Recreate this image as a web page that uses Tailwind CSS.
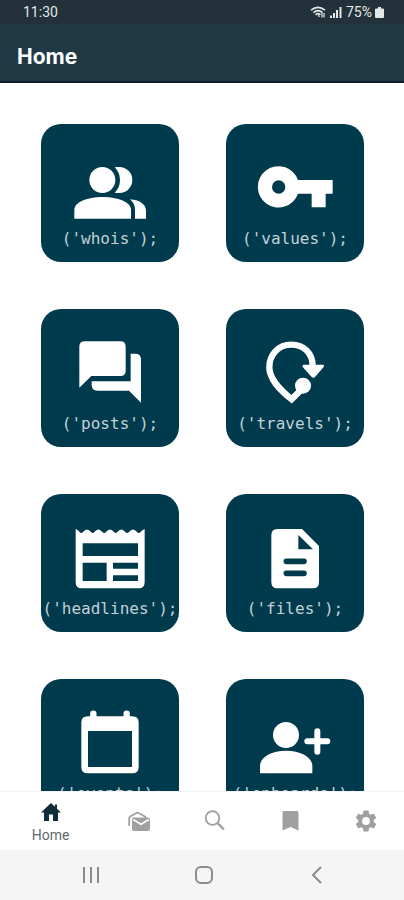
<!DOCTYPE html>
<html lang="en">
<head>
<meta charset="UTF-8">
<meta name="viewport" content="width=device-width, initial-scale=1.0">
<title>Home</title>
<script src="https://cdn.jsdelivr.net/npm/@tailwindcss/browser@4"></script>
</head>
<body class="bg-white">

<div class="h-screen flex flex-col overflow-hidden font-['Roboto',sans-serif]">

  <!-- Status bar -->
  <div class="h-6 shrink-0 flex items-center justify-between pl-[23px] pr-5 bg-[#22313a] text-[#e3e8ea] text-sm">
    <span>11:30</span>
    <div class="flex items-center gap-1">
      <svg class="w-4 h-3" viewBox="0 0 16 12" fill="none" stroke="currentColor" stroke-width="1.6">
        <path d="M1 4.2Q8-1.4 15 4.2M3.4 6.6Q8 2.6 12.6 6.6M5.6 8.8Q8 6.6 10.4 8.8"/>
        <path d="M8 9.4l1.6 1.4M12 7v4.6M14 7v4.6" stroke-width="1.2"/>
      </svg>
      <svg class="w-3 h-3" viewBox="0 0 12 12" fill="currentColor">
        <path d="M0 9.5h2V12H0zM3 7h2v5H3zM6 4h2v8H6zM9.5 1h2v11h-2z"/>
      </svg>
      <div class="flex items-center gap-[3px]">
        <span>75%</span>
        <svg class="w-[9px] h-3" viewBox="0 0 9 12" fill="currentColor">
          <path d="M3 1h3v1.5h2q1 0 1 1V11q0 1-1 1H1q-1 0-1-1V3.500q0-1 1-1h2z"/>
        </svg>
      </div>
    </div>
  </div>

  <!-- Header -->
  <header class="h-[59px] shrink-0 flex items-center px-[17px] pt-2 bg-[#1f3a45] border-b-2 border-[#0d1d25]">
    <h1 class="font-['Inter',sans-serif] font-bold text-[21px] leading-6 text-white">Home</h1>
  </header>

  <!-- Tiles -->
  <main class="flex-1 min-h-0 overflow-hidden">
    <div class="grid grid-cols-2 gap-[47px] pt-[41px] pl-[41px] pr-10 text-base leading-9 text-[#c3d0d8] font-['DejaVu_Sans_Mono',monospace]">

      <a href="#" class="aspect-square flex flex-col items-center pt-[15px] rounded-[20px] bg-[#003b4d]">
        <svg class="w-[92px] h-[82px] shrink-0" viewBox="102 87 276 246" fill="#fff">
          <circle cx="217" cy="210" r="39"/>
          <path d="M254 172Q262 170 268 171A39 39 0 0 1 268 249Q262 250 254 248Q270 232 270 210Q270 188 254 172z"/>
          <path d="M133 326V300C133 276 172 261 218 261S303 276 303 300V326z"/>
          <path d="M300 268C327 270 348 282 348 302V326H315V300Q315 280 300 268z"/>
        </svg>
        <span class="whitespace-nowrap">('whois');</span>
      </a>

      <a href="#" class="aspect-square flex flex-col items-center pt-[15px] rounded-[20px] bg-[#003b4d]">
        <svg class="w-[92px] h-[82px] shrink-0" viewBox="102 87 276 246" fill="#fff">
          <path fill-rule="evenodd" d="M249 210H353V251H332V292H290V251H249A62 62 0 1 1 249 210zM191 211A20 20 0 1 0 191 251A20 20 0 1 0 191 211z"/>
        </svg>
        <span class="whitespace-nowrap">('values');</span>
      </a>

      <a href="#" class="aspect-square flex flex-col items-center pt-[15px] rounded-[20px] bg-[#003b4d]">
        <svg class="w-[92px] h-[82px] shrink-0" viewBox="102 87 276 246" fill="#fff">
          <path d="M165 139H271Q287 139 287 155V228Q287 243 271 243H184L148 278V155Q148 139 165 139z"/>
          <path d="M302 176H316Q333 176 333 193V323L297 287H202Q185 287 185 270V259H302z"/>
        </svg>
        <span class="whitespace-nowrap">('posts');</span>
      </a>

      <a href="#" class="aspect-square flex flex-col items-center pt-[15px] rounded-[20px] bg-[#003b4d]">
        <svg class="w-[92px] h-[82px] shrink-0" viewBox="102 87 276 246" fill="#fff">
          <path d="M293 213C293 174 266 149 229 149C191 149 163 178 163 217C163 252 193 283 230 313L260 283" fill="none" stroke="#fff" stroke-width="19"/>
          <circle cx="264" cy="272" r="24"/>
          <path d="M265 209H325Q329 212 326 216L300 246Q295 251 290 246L263 216Q261 211 265 209z"/>
        </svg>
        <span class="whitespace-nowrap">('travels');</span>
      </a>

      <a href="#" class="aspect-square flex flex-col items-center pt-[15px] rounded-[20px] bg-[#003b4d]">
        <svg class="w-[92px] h-[82px] shrink-0" viewBox="102 87 276 246" fill="#fff">
          <path fill-rule="evenodd" d="M137 147Q145 150 149 156Q154 162 159 156Q171 141 183 156Q188 162 193 156Q205 141 217 156Q223 162 228 156Q240 141 252 156Q257 162 262 156Q274 141 286 156Q292 162 297 156Q309 141 321 156Q326 162 332 156Q336 150 344 147V306Q344 325 326 325H155Q137 325 137 306zM158 190V228H324V190zM158 248V303H230V248zM249 248V266H324V248zM249 286V303H324V286z"/>
        </svg>
        <span class="whitespace-nowrap">('headlines');</span>
      </a>

      <a href="#" class="aspect-square flex flex-col items-center pt-[15px] rounded-[20px] bg-[#003b4d]">
        <svg class="w-[92px] h-[82px] shrink-0" viewBox="102 87 276 246" fill="#fff">
          <path fill-rule="evenodd" d="M187 147H261L312 198V306Q312 325 294 325H187Q169 325 169 306V165Q169 147 187 147zM250 165V208H294z"/>
          <path d="M214 244H267M214 280H267" stroke="#003b4d" stroke-width="17" stroke-linecap="round"/>
        </svg>
        <span class="whitespace-nowrap">('files');</span>
      </a>

      <a href="#" class="aspect-square flex flex-col items-center pt-[15px] rounded-[20px] bg-[#003b4d]">
        <svg class="w-[92px] h-[82px] shrink-0" viewBox="102 87 276 246" fill="#fff">
          <path d="M190 146V165M290 146V165" stroke="#fff" stroke-width="19" stroke-linecap="round"/>
          <path fill-rule="evenodd" d="M173 154H307Q326 154 326 173V306Q326 325 307 325H173Q154 325 154 306V173Q154 154 173 154zM174 198V306H306V198z"/>
        </svg>
        <span class="whitespace-nowrap">('events');</span>
      </a>

      <a href="#" class="aspect-square flex flex-col items-center pt-[15px] rounded-[20px] bg-[#003b4d]">
        <svg class="w-[92px] h-[82px] shrink-0" viewBox="102 87 276 246" fill="#fff">
          <circle cx="213" cy="210" r="39"/>
          <path d="M135 325V303C135 276 168 257 213 257S292 276 292 303V325z"/>
          <path d="M307 199V260M277 229H337" stroke="#fff" stroke-width="18" stroke-linecap="round"/>
        </svg>
        <span class="whitespace-nowrap">('onboards');</span>
      </a>

    </div>
  </main>

  <!-- Tab bar -->
  <nav class="h-[59px] shrink-0 flex bg-white border-t border-[#f1f3f4] text-[#a0a0a0]">
    <a href="#" class="grow-4 basis-0 flex flex-col items-center pt-[9px] text-[#102c38]">
      <svg class="w-5 h-[22px]" viewBox="0 0 20 22" fill="currentColor">
        <path d="M10 2L0 11.500H3V20H8V13.500H12V20H17V11.500H20L16 7.700V3.500H14V5.800z"/>
      </svg>
      <span class="text-sm leading-6 text-[#5f686c]">Home</span>
    </a>
    <a href="#" aria-label="Mail" class="grow-3 basis-0 flex items-center justify-center">
      <svg class="w-6 h-6" viewBox="0 0 24 24" fill="currentColor">
        <path d="M2.200 17V9.500Q2.200 8 3.500 7.200L10.500 3.500L17.500 7.300Q18.500 8 19 8.600" fill="none" stroke="currentColor" stroke-width="1.800"/>
        <path d="M6 8.500H21Q23 8.500 23 10.500V20Q23 22 21 22H7Q5 22 5 20V10.500Q5 8.500 6 8.500z"/>
        <path d="M6 10.500L14 15.200L22 10.500" fill="none" stroke="#fff" stroke-width="1.800"/>
      </svg>
    </a>
    <a href="#" aria-label="Search" class="grow-3 basis-0 flex items-center justify-center">
      <svg class="w-6 h-6" viewBox="0 0 24 24" fill="none" stroke="currentColor" stroke-width="1.800">
        <circle cx="9.500" cy="9" r="6.800"/>
        <path d="M14.300 13.800L21 20.500" stroke-width="2.400"/>
      </svg>
    </a>
    <a href="#" aria-label="Bookmarks" class="grow-3 basis-0 flex items-center justify-center">
      <svg class="w-6 h-6" viewBox="0 0 24 24" fill="currentColor">
        <path d="M6 2H19Q20.500 2 20.500 4V21.500L12.500 18L4.500 21.500V4Q4.500 2 6 2z"/>
      </svg>
    </a>
    <a href="#" aria-label="Settings" class="grow-3 basis-0 flex items-center justify-center">
      <svg class="w-[26px] h-[26px]" viewBox="0 0 24 24" fill="currentColor">
        <path d="M19.140 12.940c.04-.3.06-.61.06-.94s-.02-.64-.07-.94l2.030-1.580a.49.49 0 0 0 .12-.61l-1.920-3.320a.49.49 0 0 0-.59-.22l-2.390.96a7 7 0 0 0-1.620-.94l-.36-2.540a.48.48 0 0 0-.48-.41h-3.840a.47.47 0 0 0-.47.41l-.36 2.540a7.200 7.200 0 0 0-1.620.94l-2.390-.96a.47.47 0 0 0-.59.220L2.740 8.870a.47.47 0 0 0 .12.610l2.030 1.580c-.05.3-.09.63-.09.94s.02.64.07.94l-2.030 1.580a.49.49 0 0 0-.12.610l1.920 3.320c.12.220.37.290.59.220l2.390-.96c.5.380 1.030.7 1.620.94l.36 2.540c.05.240.24.410.48.410h3.840c.24 0 .44-.17.47-.41l.36-2.540a7 7 0 0 0 1.620-.94l2.390.96c.22.080.47 0 .59-.22l1.920-3.320a.47.47 0 0 0-.12-.61zM12 15.600a3.600 3.600 0 1 1 0-7.200a3.600 3.600 0 0 1 0 7.200z"/>
      </svg>
    </a>
  </nav>

  <!-- System navigation -->
  <div class="h-[50px] shrink-0 flex items-center justify-center gap-[89px] pl-1 bg-[#f5f5f5] text-[#8b8b8b]">
    <button type="button" aria-label="Recent apps">
      <svg class="w-6 h-5" viewBox="0 0 24 20" fill="none" stroke="currentColor" stroke-width="2">
        <path d="M5 2V18M12 2V18M19 2V18"/>
      </svg>
    </button>
    <button type="button" aria-label="Home screen">
      <svg class="w-6 h-5" viewBox="0 0 24 20" fill="none" stroke="currentColor" stroke-width="2">
        <rect x="4" y="2" width="16" height="16" rx="5"/>
      </svg>
    </button>
    <button type="button" aria-label="Back">
      <svg class="w-6 h-5" viewBox="0 0 24 20" fill="none" stroke="currentColor" stroke-width="2">
        <path d="M16 2L8 10L16 18"/>
      </svg>
    </button>
  </div>

</div>

</body>
</html>
